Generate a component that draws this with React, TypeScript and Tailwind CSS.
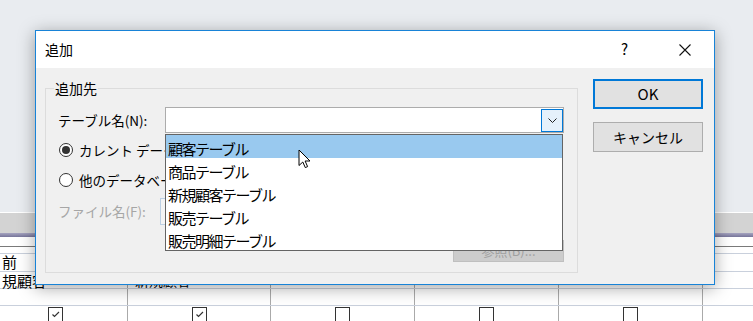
import React from "react";

const items = ["顧客テーブル", "商品テーブル", "新規顧客テーブル", "販売テーブル", "販売明細テーブル"];

function Check({ checked }: { checked: boolean }) {
  return (
    <div className="mt-[1px] w-[15px] h-[15px] border border-[#333] bg-white">
      {checked && (
        <svg width="13" height="13" viewBox="0 0 13 13">
          <path d="M3.5 6.5 L5.5 8.5 L10 4" fill="none" stroke="#333" strokeWidth="1.2" />
        </svg>
      )}
    </div>
  );
}

function Row({ h, children }: { h: string; children?: React.ReactNode[] }) {
  const cells = children ?? [];
  return (
    <div className={`flex ${h} border-b border-[#c9d0dc]`}>
      <div className="w-[128px] shrink-0 border-r border-[#aaaaaa] pl-[2px]">{cells[0]}</div>
      <div className="w-[143px] shrink-0 border-r border-[#aaaaaa] pl-[7px]">{cells[1]}</div>
      <div className="w-[144px] shrink-0 border-r border-[#aaaaaa]">{cells[2]}</div>
      <div className="w-[144px] shrink-0 border-r border-[#aaaaaa]">{cells[3]}</div>
      <div className="w-[144px] shrink-0 border-r border-[#aaaaaa]">{cells[4]}</div>
      <div className="flex-1" />
    </div>
  );
}

export default function App() {
  return (
    <div className="relative w-[753px] h-[321px] overflow-hidden bg-white font-['Noto_Sans_CJK_JP',sans-serif] text-black">
      {/* background window */}
      <div className="h-[212px] bg-[#e9ecf0]" />
      <div className="h-[1px] bg-white" />
      <div className="h-[20px] bg-[#d3d3d3]" />
      <div className="h-[4px] bg-gradient-to-b from-[#a6a4c0] to-[#77759a]" />
      <div className="h-[9px] bg-white" />
      <div className="border-t border-[#7a7a7a]">
        <Row h="h-[7px]" />
        <Row h="h-[18px]">
          {[<div key="a" className="text-[15px] leading-[16px]">前</div>]}
        </Row>
        <Row h="h-[17px]">
          {[
            <div key="a" className="text-[15px] leading-[17px] whitespace-nowrap">規顧客</div>,
            <div key="b" className="text-[14px] leading-[16px] whitespace-nowrap">新規顧客</div>,
          ]}
        </Row>
        <Row h="h-[17px]" />
        <div className="flex h-[30px]">
          <div className="w-[128px] shrink-0 border-r border-[#aaaaaa] pl-[48px]"><Check checked /></div>
          <div className="w-[143px] shrink-0 border-r border-[#aaaaaa] flex justify-center"><Check checked /></div>
          <div className="w-[144px] shrink-0 border-r border-[#aaaaaa] flex justify-center"><Check checked={false} /></div>
          <div className="w-[144px] shrink-0 border-r border-[#aaaaaa] flex justify-center"><Check checked={false} /></div>
          <div className="w-[144px] shrink-0 border-r border-[#aaaaaa] flex justify-center"><Check checked={false} /></div>
          <div className="flex-1" />
        </div>
      </div>

      {/* dialog */}
      <div className="absolute left-[35px] top-[30px] w-[680px] h-[255px] border border-[#1883d7] bg-[#f0f0f0] shadow-[0_3px_16px_rgba(0,0,0,0.35)]">
        <div className="h-[37px] bg-white flex items-center pl-[9px] text-[14px]">
          <span>追加</span>
          <span className="ml-auto text-[15px]">?</span>
          <svg className="ml-[51px] mr-[23px]" width="12" height="12" viewBox="0 0 12 12">
            <path d="M0.5 0.5 L11.5 11.5 M11.5 0.5 L0.5 11.5" stroke="#111" strokeWidth="1.1" />
          </svg>
        </div>

        <div className="flex pl-[9px]">
          {/* group box */}
          <div className="relative mt-[20px] w-[533px] h-[185px] border border-[#dcdcdc] pt-[18px] pl-[12px] pr-[13px] text-[13px]">
            <span className="absolute left-[8px] -top-[10px] px-[1px] bg-[#f0f0f0] text-[14px] leading-[18px]">追加先</span>

            <div className="flex h-[26px] items-center">
              <span className="w-[107px] shrink-0 text-[13.5px]">テーブル名(N):</span>
              <div className="relative flex-1 h-[26px]">
                <div className="h-full border border-[#acacac] bg-white flex justify-end pt-[1px]">
                  <div className="w-[22px] h-[23px] border border-[#0078d7] bg-[#e5f1fb] flex items-center justify-center">
                    <svg width="9" height="5" viewBox="0 0 9 5">
                      <path d="M0.5 0.5 L4.5 4.5 L8.5 0.5" fill="none" stroke="#222" strokeWidth="1" />
                    </svg>
                  </div>
                </div>
                {/* dropdown list */}
                <div className="absolute left-0 top-[27px] z-10 w-[398px] h-[117px] border border-[#646464] bg-white">
                  {items.map((t, i) => (
                    <div
                      key={t}
                      className={`h-[23px] pl-[2px] pt-[3px] text-[15px] leading-[21px] tracking-[-1.5px] whitespace-nowrap ${i === 0 ? "bg-[#99c9ef]" : ""}`}
                    >
                      {t}
                    </div>
                  ))}
                </div>
              </div>
            </div>

            <div className="mt-[9px] h-[16px] flex items-center whitespace-nowrap">
              <div className="ml-[1px] w-[14px] h-[14px] rounded-full border border-[#333] bg-white flex items-center justify-center">
                <div className="w-[8px] h-[8px] rounded-full bg-[#333]" />
              </div>
              <span className="ml-[6px] text-[13.5px]">カレント データベース(C)</span>
            </div>

            <div className="mt-[14px] h-[16px] flex items-center whitespace-nowrap">
              <div className="ml-[1px] w-[14px] h-[14px] rounded-full border border-[#333] bg-white" />
              <span className="ml-[6px] text-[13.5px]">他のデータベース(A):</span>
            </div>

            <div className="mt-[10px] h-[27px] flex items-center">
              <span className="w-[102px] shrink-0 text-[#a6a6a6] text-[13.5px]">ファイル名(F):</span>
              <div className="w-[280px] h-[27px] border border-[#bcd0e4] bg-[#f4f4f4]" />
            </div>

            <div className="mt-[15px] flex justify-end">
              <div className="w-[111px] h-[22px] border border-[#bfbfbf] bg-[#cccccc] flex items-center justify-center text-[#a0a0a0]">
                参照(B)...
              </div>
            </div>
          </div>

          {/* buttons */}
          <div className="ml-[15px] mt-[11px] w-[110px] flex flex-col">
            <div className="h-[30px] border-2 border-[#0078d7] bg-[#e1e1e1] flex items-center justify-center text-[15px]">OK</div>
            <div className="mt-[13px] h-[30px] border border-[#adadad] bg-[#e1e1e1] flex items-center justify-center text-[14px]">
              キャンセル
            </div>
          </div>
        </div>
      </div>

      {/* mouse cursor */}
      <svg className="absolute left-[298px] top-[149px] z-20" width="13" height="20" viewBox="0 0 13 20">
        <path d="M1 1 L1 16.5 L4.8 13 L7.3 18.6 L9.6 17.6 L7.1 12 L12 12 Z" fill="#fff" stroke="#000" strokeWidth="1" strokeLinejoin="round" />
      </svg>
    </div>
  );
}
